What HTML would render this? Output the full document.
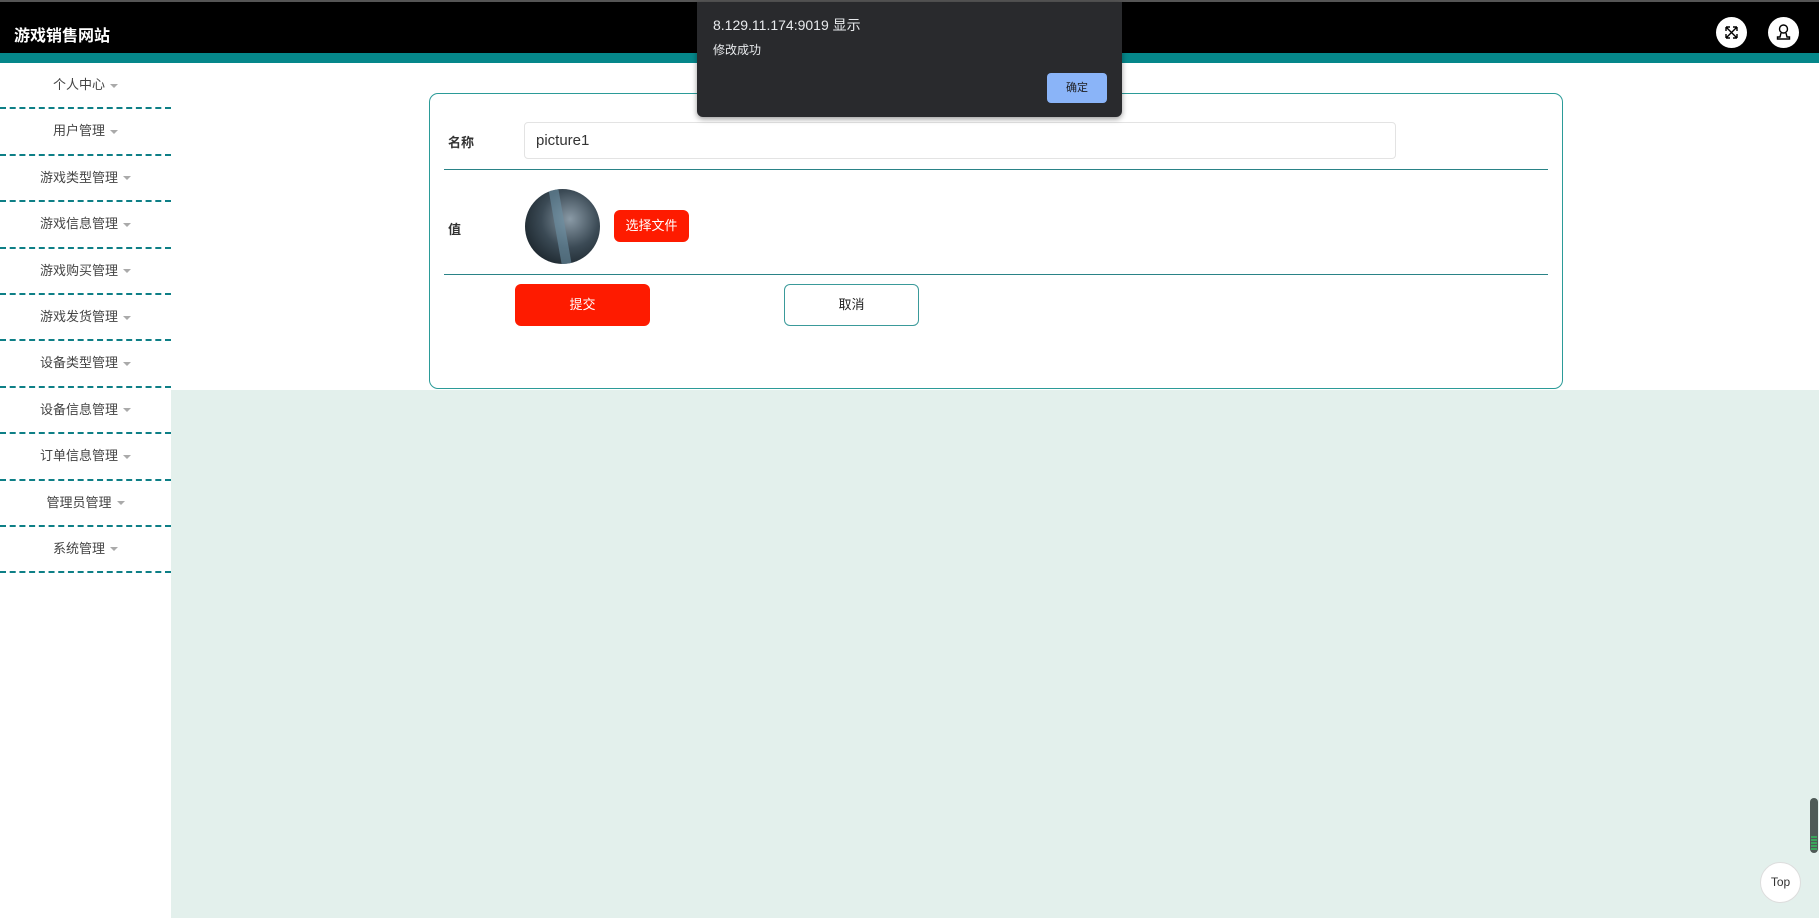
<!DOCTYPE html>
<html><head><meta charset="utf-8"><style>
*{margin:0;padding:0;box-sizing:border-box}
body{width:1819px;height:918px;overflow:hidden;background:#fff;font-family:"Liberation Sans","Noto Sans CJK SC",sans-serif;position:relative}
.abs{position:absolute}
#hdr{left:0;top:0;width:1819px;height:53px;background:#000;border-top:2px solid #555}
#band{left:0;top:53px;width:1819px;height:10px;background:#05878a}
#title{left:14px;top:22px;color:#fff;font-size:16px;font-weight:bold}
.ic{width:31px;height:31px;border-radius:50%;background:#fff;top:17px}
#side{left:0;top:63px;width:171px}
.it{height:46.4px;border-bottom:2px dashed #0e7f86;text-align:center;font-size:13px;color:#444;line-height:44px}
.it::after{content:"";display:inline-block;margin-left:5px;vertical-align:middle;border:4px solid transparent;border-top:4px solid #aaa;border-bottom:none}
#bg{left:171px;top:390px;width:1648px;height:528px;background:#e3f0ec}
#card{left:429px;top:93px;width:1134px;height:296px;border:1px solid #2b9b98;border-radius:9px;background:#fff}
.lbl{font-size:13px;font-weight:bold;color:#333}
.ln{height:1px;background:#2a8387;left:444px;width:1104px}
.btn{border-radius:6px;font-size:13px;text-align:center}
#dlg{left:697px;top:2px;width:425px;height:115px;background:#292a2d;border-radius:0 0 6px 6px;box-shadow:0 2px 6px rgba(0,0,0,.4);color:#e8eaed}
</style></head><body>
<div id="hdr" class="abs"></div>
<div id="band" class="abs"></div>
<div id="title" class="abs">游戏销售网站</div>
<div class="abs ic" style="left:1716px"><svg width="31" height="31" viewBox="0 0 31 31" fill="none" stroke="#000" stroke-width="1.4"><path d="M10 10l11 11M21 10l-11 11M10 10h4M10 10v4M21 10h-4M21 10v4M10 21h4M10 21v-4M21 21h-4M21 21v-4"/></svg></div>
<div class="abs ic" style="left:1768px"><svg width="31" height="31" viewBox="0 0 31 31" fill="none" stroke="#000" stroke-width="1.4"><circle cx="15.5" cy="12" r="4"/><path d="M13 16l-1 4h-2.5v2h12v-2H19l-1-4"/></svg></div>
<div id="side" class="abs">
<div class="it">个人中心</div><div class="it">用户管理</div><div class="it">游戏类型管理</div><div class="it">游戏信息管理</div><div class="it">游戏购买管理</div><div class="it">游戏发货管理</div><div class="it">设备类型管理</div><div class="it">设备信息管理</div><div class="it">订单信息管理</div><div class="it">管理员管理</div><div class="it">系统管理</div>
</div>
<div id="bg" class="abs"></div>
<div id="card" class="abs"></div>
<div class="abs lbl" style="left:448px;top:132px">名称</div>
<div class="abs" style="left:524px;top:122px;width:872px;height:37px;border:1px solid #e3e3e3;border-radius:4px;font-size:15px;color:#333;padding:9px 11px">picture1</div>
<div class="abs ln" style="top:169px"></div>
<div class="abs lbl" style="left:448px;top:219px">值</div>
<div class="abs" style="left:525px;top:189px;width:75px;height:75px;border-radius:50%;background:radial-gradient(circle at 60% 40%,#8a9aa6,#3b4a55 45%,#1c262d 80%);overflow:hidden"><div style="position:absolute;left:30px;top:0;width:10px;height:75px;background:#6a8fa3;opacity:.6;transform:skewX(10deg)"></div></div>
<div class="abs btn" style="left:614px;top:210px;width:75px;height:32px;background:#fe1b00;color:#fff;line-height:32px">选择文件</div>
<div class="abs ln" style="top:274px"></div>
<div class="abs btn" style="left:515px;top:284px;width:135px;height:42px;background:#fe1b00;color:#fff;line-height:42px">提交</div>
<div class="abs btn" style="left:784px;top:284px;width:135px;height:42px;border:1px solid #3a9a9a;color:#222;line-height:40px">取消</div>
<div id="dlg" class="abs">
<div class="abs" style="left:16px;top:13px;font-size:14px">8.129.11.174:9019 显示</div>
<div class="abs" style="left:16px;top:39px;font-size:12px">修改成功</div>
<div class="abs" style="left:350px;top:71px;width:60px;height:30px;background:#8ab4f8;border-radius:4px;color:#202124;font-size:11px;text-align:center;line-height:30px">确定</div>
</div>
<div class="abs" style="left:1810px;top:798px;width:8px;height:55px;background:#4f5a57;border-radius:4px"><div style="position:absolute;bottom:3px;left:1px;width:6px;height:14px;background:repeating-linear-gradient(#3ba55c 0 2px,#4f5a57 2px 3px)"></div></div>
<div class="abs" style="left:1760px;top:862px;width:41px;height:41px;border-radius:50%;background:#fff;border:1px solid #ddd;font-size:12px;text-align:center;line-height:39px;color:#333">Top</div>
</body></html>
